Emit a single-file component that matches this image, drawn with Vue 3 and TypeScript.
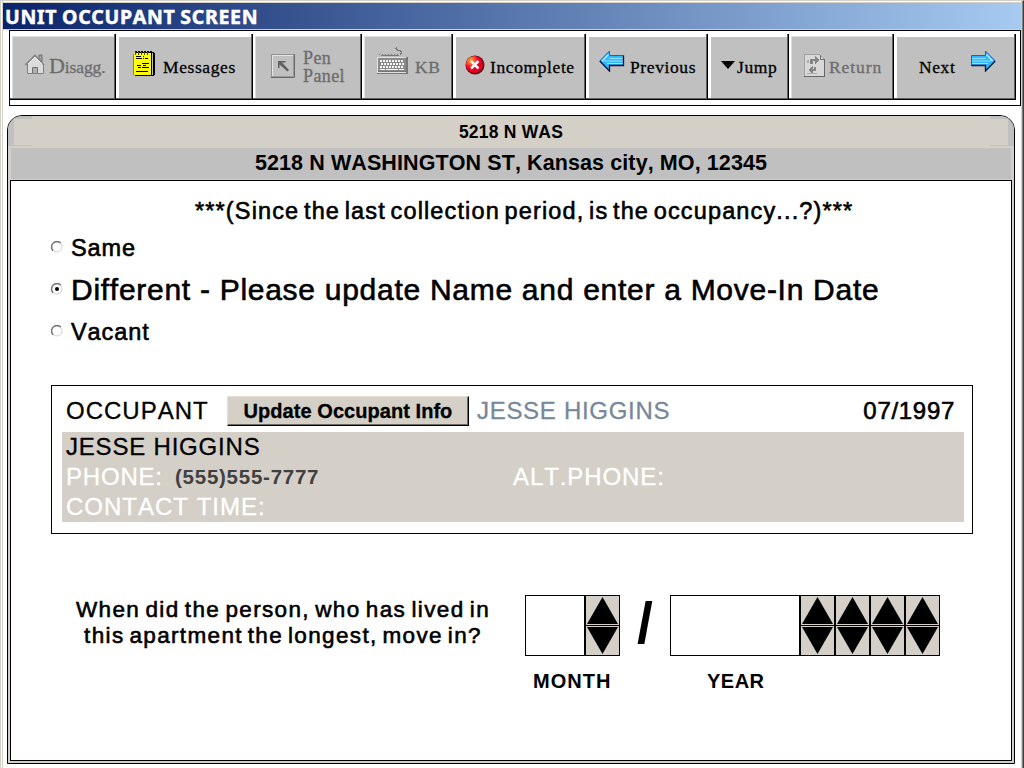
<script setup lang="ts">
import { ref } from 'vue'

interface ToolButton {
  id: string
  label: string
  disabled?: boolean
}

interface Option {
  value: string
  label: string
  large?: boolean
}

const tools: ToolButton[] = [
  { id: 'disagg', label: 'Disagg.', disabled: true },
  { id: 'messages', label: 'Messages' },
  { id: 'pen', label: 'Pen Panel', disabled: true },
  { id: 'kb', label: 'KB', disabled: true },
  { id: 'incomplete', label: 'Incomplete' },
  { id: 'previous', label: 'Previous' },
  { id: 'jump', label: 'Jump' },
  { id: 'return', label: 'Return', disabled: true },
  { id: 'next', label: 'Next' }
]

const options: Option[] = [
  { value: 'same', label: 'Same' },
  { value: 'different', label: 'Different - Please update Name and enter a Move-In Date', large: true },
  { value: 'vacant', label: 'Vacant' }
]

const occupancy = ref('different')
const month = ref('')
const year = ref('')

const stepMonth = (delta: number) => {
  const next = (Number(month.value) || 0) + delta
  if (next >= 1 && next <= 12) month.value = String(next).padStart(2, '0')
}

// digit 1 is the thousands column, digit 4 the units
const stepYear = (digit: number, delta: number) => {
  const next = (Number(year.value) || 0) + delta * 10 ** (4 - digit)
  if (next >= 0 && next <= 9999) year.value = String(next).padStart(4, '0')
}
</script>

<template>
  <div class="window">
    <div class="title-bar"><span>UNIT OCCUPANT SCREEN</span></div>

    <div class="toolbar">
      <button
        v-for="tool in tools"
        :key="tool.id"
        class="tool"
        :class="['tool-' + tool.id, { disabled: tool.disabled }]"
      >
        <svg v-if="tool.id === 'disagg'" class="icon" width="20" height="21" viewBox="0 0 20 21">
          <path d="M2 10 L10 2 L18 10 V19 H2Z" fill="#dcdcdc" />
          <path d="M14 1h3v7l-3-3z" fill="#a0a0a0" stroke="#707070" />
          <path d="M0.5 11 L10 1.5 L19 11" fill="none" stroke="#808080" stroke-width="1.6" />
          <path d="M2 11 L10 3 L17 10" fill="none" stroke="#f4f4f4" />
          <path d="M2.5 10v9.5h16V10" fill="none" stroke="#808080" />
          <path d="M7.5 19v-5.500h5V19" fill="#b0b0b0" stroke="#707070" />
        </svg>

        <svg v-else-if="tool.id === 'messages'" class="icon" width="23" height="26" viewBox="0 0 23 26" shape-rendering="crispEdges">
          <path d="M3 1h18v1h1v22h-1v1H3z" fill="#000" />
          <path d="M3 2h17v22H3z" fill="#c0c0c0" />
          <path d="M18 2h1v22h-1z" fill="#000" />
          <path d="M1 2h17v22H1z" fill="#ff0" />
          <path d="M0 3h1v21H0z" fill="#808080" />
          <path d="M2 24h17v1H2z" fill="#000" />
          <path d="M2 0h2v1H2zM5 0h2v1H5zM8 0h2v1H8zM11 0h2v1h-2zM14 0h2v1h-2zM17 0h2v1h-2z" fill="#000" />
          <path d="M2 1h1v3H2zM5 1h1v3H5zM8 1h1v3H8zM11 1h1v3h-1zM14 1h1v3h-1z" fill="#505000" />
          <path d="M3 5h5v1H3zM10 5h1v1h-1zM3 7h6v1H3zM10 7h1v1h-1zM12 7h3v1h-3zM9 12h7v1H9zM4 14h4v1H4zM10 14h3v1h-3zM5 16h3v1H5zM9 16h7v1H9zM3 20h12v1H3z" fill="#000" />
        </svg>

        <svg v-else-if="tool.id === 'pen'" class="icon" width="24" height="24" viewBox="0 0 24 24">
          <path d="M.5 23.500V.5h23" fill="none" stroke="#909090" />
          <path d="M1.500 22V1.500H22" fill="none" stroke="#e4e4e4" />
          <path d="M1 22.500h21.500V1" fill="none" stroke="#999" />
          <path d="M0 23.500h23.500V0" fill="none" stroke="#686868" />
          <path d="M7 7h7.500v1.500h-3.500l7 7.500-1.500 1.500L8.500 10.500V14H7z" fill="#606060" />
        </svg>

        <svg v-else-if="tool.id === 'kb'" class="icon" width="33" height="28" viewBox="0 0 33 28" shape-rendering="crispEdges">
          <path d="M3 7h1v1H3zM5 8h1v-1h1v1h2v-1h1v1h2v-1h1v1h2v-1h1v1h2v-1h1v1h2v-1h1v1h2V6h1V5h-1V4h-3V3h-1V2h-1V1h1V0h1v2h1v1h3v1h1v3h-1v1h-2v1H5z" fill="#777" />
          <path d="M1 10h31v17H1z" fill="#777" />
          <path d="M1 10h29v1H1zM1 10h1v16H1zM2 25h28v1H2z" fill="#e0e0e0" />
          <path d="M2 11h28v13H2z" fill="#8a8a8a" />
          <path d="M4 13.500h24M5 16.500h24M4 19.500h24" stroke="#f8f8f8" stroke-width="2" stroke-dasharray="2 1" />
          <path d="M4 22.500h5M10 22.500h12M23 22.500h5" stroke="#f8f8f8" />
        </svg>

        <svg v-else-if="tool.id === 'incomplete'" class="icon" width="20" height="20" viewBox="0 0 20 20">
          <defs>
            <radialGradient id="ball" cx=".28" cy=".25" r=".65">
              <stop offset="0" stop-color="#ffa030" />
              <stop offset=".38" stop-color="#fb5528" />
              <stop offset=".65" stop-color="#f4002c" />
              <stop offset="1" stop-color="#e00020" />
            </radialGradient>
          </defs>
          <circle cx="10" cy="10" r="9.500" fill="#600010" />
          <circle cx="9.500" cy="9.500" r="8.600" fill="url(#ball)" />
          <path d="M6 6l7.500 7.500M13.500 6L6 13.500" stroke="#fff" stroke-width="2.500" />
        </svg>

        <svg v-else-if="tool.id === 'jump'" class="icon" width="14" height="8" viewBox="0 0 14 8">
          <path d="M0 0h14L7 8z" fill="#000" />
        </svg>

        <svg v-else-if="tool.id === 'return'" class="icon" width="21" height="23" viewBox="0 0 21 23" shape-rendering="crispEdges">
          <path d="M.5.5h15l5 5v17H.5z" fill="#d8d8d8" stroke="#a0a0a0" />
          <path d="M0 22.500h20.500V5" fill="none" stroke="#666" />
          <path d="M16 1v4h4" fill="none" stroke="#707070" />
          <path d="M6 10V5h5V2l5 4-5 4V7H9v3z" fill="#858585" />
          <path d="M12 13v4H9v3l-5-4 5-4v3h1v-2z" fill="#858585" />
          <path d="M3 6h2v3H3zM3 19h10v1H3z" fill="#aaa" />
        </svg>

        <span v-if="tool.id === 'disagg'" class="label"><big>D</big>isagg.</span>
        <span v-else class="label">{{ tool.label }}</span>

        <!-- the two arrows share a silhouette, but the shadow stays at the lower right -->
        <svg v-if="tool.id === 'previous'" class="icon arrow" width="26" height="22" viewBox="0 0 26 22">
          <path d="M10.500 1v4.500h14v10h-14V21L.8 11z" fill="#30b8ff" />
          <path d="M10 8.500h14M5 11h19M8 13.500h16" stroke="#90e4ff" />
          <path d="M.8 11L10.500 1v4.500h14" fill="none" stroke="#1060e0" />
          <path d="M3 11L9.500 4.500" stroke="#b0f0ff" stroke-width="1.500" />
          <path d="M.8 11l9.700 10v-5.500h14v-10" fill="none" stroke="#001030" stroke-width="1.300" />
        </svg>

        <svg v-if="tool.id === 'next'" class="icon arrow" width="26" height="22" viewBox="0 0 26 22">
          <path d="M15.500 1v4.500h-14v10h14V21l9.700-10z" fill="#30b8ff" />
          <path d="M2 8.500h14M2 11h19M2 13.500h16" stroke="#90e4ff" />
          <path d="M1.500 15.500v-10h14V1l9.700 10" fill="none" stroke="#1060e0" />
          <path d="M16.500 4.500L22.500 11" stroke="#b0f0ff" stroke-width="1.500" />
          <path d="M1.500 15.500h14V21l9.700-10" fill="none" stroke="#001030" stroke-width="1.300" />
        </svg>
      </button>
    </div>

    <div class="panel">
      <div class="unit-name">
        <span class="corner left"></span>
        <span class="unit-text">5218 N WAS</span>
        <span class="corner right"></span>
      </div>
      <div class="address"><span>5218 N WASHINGTON ST, Kansas city, MO, 12345</span></div>

      <div class="content">
        <div class="question"><span>***(Since the last collection period, is the occupancy...?)***</span></div>

        <div class="options">
          <label
            v-for="opt in options"
            :key="opt.value"
            class="option"
            :class="{ large: opt.large }"
            @click="occupancy = opt.value"
          >
            <svg class="radio" width="12" height="12" viewBox="0 0 12 12">
              <circle cx="6" cy="6" r="5" fill="#fff" stroke="#d4d0c8" />
              <path d="M2.100 9.900A5.500 5.500 0 0 1 9.900 2.100" fill="none" stroke="#707070" stroke-width="1.300" />
              <circle v-if="occupancy === opt.value" cx="6" cy="6" r="2" fill="#000" />
            </svg>
            <span>{{ opt.label }}</span>
          </label>
        </div>

        <div class="occupant">
          <div class="occupant-head">
            <span class="occupant-title">OCCUPANT</span>
            <button class="update-btn">Update Occupant Info</button>
            <span class="occupant-name">JESSE HIGGINS</span>
            <span class="since">07/1997</span>
          </div>
          <div class="details">
            <div class="row name">JESSE HIGGINS</div>
            <div class="row">
              <span class="phone-label">PHONE:</span>
              <span class="phone">(555)555-7777</span>
              <span class="alt-phone">ALT.PHONE:</span>
            </div>
            <div class="row contact">CONTACT TIME:</div>
          </div>
        </div>

        <div class="move-in">
          <div class="prompt">
            <div class="line1">When did the person, who has lived in</div>
            <div class="line2">this apartment the longest, move in?</div>
          </div>

          <div class="date-part">
            <div class="controls">
              <div class="field month">{{ month }}</div>
              <svg class="spinner" width="33" height="59" viewBox="0 0 33 59">
                <path d="M16.500 1L32 28H1z" @click="stepMonth(1)" />
                <path d="M0 29h33v1H0z" />
                <path d="M1 31h31L16.500 58z" @click="stepMonth(-1)" />
              </svg>
            </div>
            <div class="caption month-caption">MONTH</div>
          </div>

          <div class="slash">/</div>

          <div class="date-part">
            <div class="controls">
              <div class="field year">{{ year }}</div>
              <svg v-for="n in 4" :key="n" class="spinner" width="33" height="59" viewBox="0 0 33 59">
                <path d="M16.500 1L32 28H1z" @click="stepYear(n, 1)" />
                <path d="M0 29h33v1H0z" />
                <path d="M1 31h31L16.500 58z" @click="stepYear(n, -1)" />
              </svg>
            </div>
            <div class="caption year-caption">YEAR</div>
          </div>
        </div>
      </div>
    </div>
  </div>
</template>

<style>
body {
  margin: 0;
  overflow: hidden;
}
</style>

<style scoped>
.window {
  box-sizing: border-box;
  width: 1024px;
  height: 768px;
  overflow: hidden;
  padding: 1px 0 0 1px;
  border-top: 1px solid #d4d0c8;
  border-left: 1px solid #d4d0c8;
  border-right: 1px solid #404040;
  box-shadow: inset -1px 0 #808080, inset -2px 0 #d4d0c8, inset 1px 0 #fff, inset 2px 0 #d4d0c8;
  background: #fff;
  font-family: "Liberation Sans", Arial, sans-serif;
  font-kerning: none;
  color: #000;
  white-space: nowrap;
}

.title-bar {
  height: 26px;
  margin-right: 2px;
  border: 1px solid #d4d0c8;
  border-right: none;
  background: linear-gradient(to right, #0a246a, #a6caf0);
  color: #fff;
  font: bold 19.5px/27px "Noto Sans", sans-serif;
  font-kerning: none;
  letter-spacing: 0.7px;
  word-spacing: -1px;
  padding-left: 2px;
  -webkit-text-stroke: 0.5px;
}

.toolbar {
  box-sizing: border-box;
  display: flex;
  width: 1012px;
  height: 76px;
  margin-left: 7px;
  padding-top: 3px;
  border: 1px solid #000;
}

.tool {
  box-sizing: border-box;
  display: flex;
  flex: none;
  align-items: center;
  height: 66px;
  padding: 0;
  border: 0 solid #000;
  border-width: 0 1px 1px 0;
  background: #c0c0c0;
  box-shadow: inset -1px -1px #606060, inset 3px 3px #fff;
  font: 17.5px/18px "Liberation Serif", "Times New Roman", serif;
  letter-spacing: 0.6px;
  color: #000;
  text-align: left;
  -webkit-text-stroke: 0.3px;
}

.tool.disabled {
  color: #6c6c6c;
  box-shadow: inset -1px -1px #606060, inset 2px 2px #fff, inset 3px 3px #e0e0e0;
}

.icon {
  display: block;
  flex: none;
}

.tool-disagg {
  width: 106px;
  padding-left: 15px;
  gap: 4px;
}

.tool-disagg .label {
  letter-spacing: -0.1px;
}

.tool-disagg big {
  font-size: 22px;
}

.tool-disagg .icon {
  margin-bottom: 5px;
}

.tool-messages {
  width: 137px;
  padding-left: 17px;
  gap: 7px;
}

.tool-messages .icon {
  margin-bottom: 5px;
}

.tool-pen {
  width: 109px;
  padding-left: 18px;
  gap: 8px;
}

.tool-pen .label {
  width: 50px;
  font-size: 18px;
  letter-spacing: 0.4px;
  white-space: normal;
}

.tool-pen .icon {
  margin-bottom: 2px;
}

.tool-kb {
  width: 91px;
  padding-left: 14px;
  gap: 6px;
}

.tool-kb .icon {
  margin-bottom: 12px;
}

.tool-incomplete {
  width: 133px;
  padding-left: 12px;
  gap: 5px;
}

.tool-incomplete .icon {
  margin-bottom: 3px;
}

.tool-previous {
  width: 122px;
  padding-left: 13px;
  gap: 5px;
}

.tool-previous .icon {
  order: -1;
}

.arrow {
  margin-bottom: 12px;
}

.tool-jump {
  width: 81px;
  padding-left: 13px;
  gap: 2px;
}

.tool-jump .icon {
  margin-bottom: 4px;
}

.tool-return {
  width: 105px;
  padding-left: 15px;
  gap: 4px;
}

.tool-return .label {
  letter-spacing: 0.9px;
}

.tool-return .icon {
  margin-bottom: 3px;
}

.tool-next {
  width: 122px;
  padding-left: 25px;
  gap: 15px;
}

.panel {
  box-sizing: border-box;
  width: 1008px;
  height: 649px;
  margin: 9px 0 0 5px;
  padding: 0 2px 2px;
  border: 1px solid #000;
  border-radius: 15px 15px 0 0;
  background: #d4d0c8;
  overflow: hidden;
}

.unit-name {
  display: flex;
  justify-content: space-between;
  height: 32px;
  margin: 0 -2px;
  font-weight: bold;
  font-size: 17.5px;
  line-height: 32px;
  letter-spacing: 0.2px;
}

.corner {
  box-sizing: border-box;
  width: 24px;
  height: 30px;
  border: 0 solid #c0c0c0;
  border-width: 3px 0 1px;
}

.corner.left {
  border-left-width: 6px;
}

.corner.right {
  border-right-width: 6px;
}

.address {
  height: 31px;
  margin: 0 1px;
  background: #c0c0c0;
  border-bottom: 1px solid #d4d0c8;
  text-align: center;
  font-weight: bold;
  font-size: 21.5px;
  line-height: 31px;
  letter-spacing: 0.1px;
}

.content {
  box-sizing: border-box;
  height: 581px;
  border: 1px solid #000;
  background: #fff;
}

.question {
  height: 31px;
  padding: 15px 0 0 184px;
  font-size: 23.5px;
  line-height: 30px;
  letter-spacing: 1.14px;
  word-spacing: -3px;
  -webkit-text-stroke: 0.6px;
}

.options {
  padding-left: 40px;
}

.option {
  display: flex;
  align-items: center;
  height: 42px;
  gap: 8px;
  font-size: 23.5px;
  letter-spacing: 0.9px;
  -webkit-text-stroke: 0.6px;
}

.option.large {
  font-size: 30px;
  letter-spacing: 0.72px;
}

.radio {
  margin-bottom: 2px;
}

.occupant {
  box-sizing: border-box;
  width: 922px;
  height: 149px;
  margin: 32px 0 0 40px;
  padding: 0 8px 0 10px;
  border: 1px solid #000;
}

.occupant-head {
  box-sizing: border-box;
  display: flex;
  align-items: center;
  height: 46px;
  padding: 4px 9px 0 4px;
  font-size: 24px;
  letter-spacing: 0.7px;
  -webkit-text-stroke: 0.3px;
}

.occupant-title {
  width: 161px;
  letter-spacing: 1px;
}

.update-btn {
  box-sizing: border-box;
  width: 242px;
  height: 30px;
  padding: 0;
  border: 1px solid #000;
  border-top-color: #e4e0d8;
  border-left-color: #e4e0d8;
  box-shadow: inset -1px -1px #706c64;
  background: #d4d0c8;
  color: #000;
  font: bold 20px/26px "Liberation Sans", Arial, sans-serif;
  letter-spacing: 0.05px;
}

.occupant-name {
  margin-left: 8px;
  color: #778899;
}

.since {
  margin-left: auto;
  -webkit-text-stroke: 0.6px;
}

.details {
  height: 90px;
  background: #d4d0c8;
  color: #fff;
  font-size: 24px;
  letter-spacing: 0.8px;
  -webkit-text-stroke: 0.3px;
}

.row {
  display: flex;
  height: 30px;
  padding-left: 4px;
  line-height: 30px;
}

.row.name {
  color: #000;
}

.row.contact {
  letter-spacing: 1px;
}

.phone-label {
  width: 109px;
}

.phone {
  width: 338px;
  color: #404040;
  font-weight: bold;
  font-size: 20.5px;
  letter-spacing: 0.75px;
  -webkit-text-stroke: 0;
}

.alt-phone {
  letter-spacing: 0.9px;
}

.move-in {
  display: flex;
  align-items: flex-start;
  margin: 61px 0 0 40px;
}

.prompt {
  width: 464px;
  margin: 2px 10px 0 0;
  text-align: center;
  font-size: 22.5px;
  line-height: 26px;
  letter-spacing: 1.35px;
  word-spacing: -2.7px;
  -webkit-text-stroke: 0.6px;
}

.line1 {
  word-spacing: -2.3px;
}

.controls {
  display: flex;
}

.field {
  box-sizing: border-box;
  height: 61px;
  border: 1px solid #000;
  font-size: 40px;
  line-height: 59px;
  text-align: center;
}

.field.month {
  width: 60px;
}

.field.year {
  width: 130px;
}

.spinner {
  border: 1px solid #000;
  background: #d4d0c8;
}

.slash {
  width: 50px;
  font-size: 57px;
  font-weight: bold;
  line-height: 56px;
  text-align: center;
}

.caption {
  margin-top: 13px;
  font-size: 20px;
  font-weight: bold;
  line-height: 24px;
  letter-spacing: 1px;
}

.month-caption {
  padding-left: 8px;
}

.year-caption {
  padding-left: 37px;
  letter-spacing: 0.5px;
}
</style>
